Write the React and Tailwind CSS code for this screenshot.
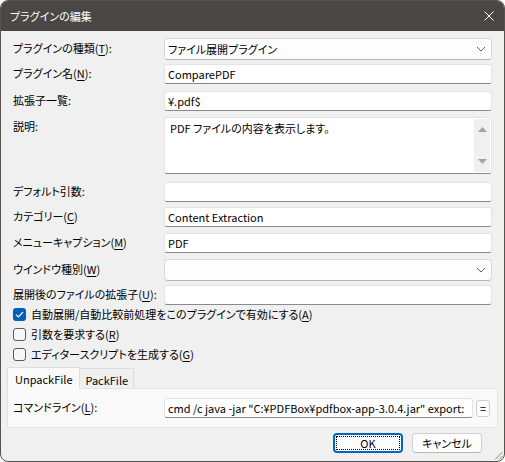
import React from "react";

const font = "[font-family:'Noto_Sans_CJK_JP',sans-serif] [font-feature-settings:'palt']";

const U = ({ c }) => <span className="underline underline-offset-[2px] decoration-[1px]">{c}</span>;

const Edit = ({ children, className = "" }) => (
  <div
    className={
      "h-[20px] bg-white border border-[#e3e3e3] border-b-[#8a8a8a] rounded-[3px] flex items-center pl-[3px] overflow-hidden whitespace-nowrap text-[11px] leading-[16px] text-black " +
      className
    }
  >
    {children}
  </div>
);

const Chevron = () => (
  <svg width="10" height="6" viewBox="0 0 10 6" className="shrink-0">
    <path d="M1 1 L5 5 L9 1" fill="none" stroke="#5f5f5f" strokeWidth="1" />
  </svg>
);

const Combo = ({ children }) => (
  <div className="h-[22px] bg-[#fdfdfd] border border-[#d9d9d9] border-b-[#b5b5b5] rounded-[4px] flex items-center justify-between pl-[3px] pr-[5px] text-[11px] leading-[16px] text-black">
    <span>{children}</span>
    <Chevron />
  </div>
);

const Label = ({ children, className = "" }) => (
  <div className={"text-[11px] leading-[16px] text-black whitespace-nowrap " + className}>{children}</div>
);

const Row = ({ h, label, children, lpt = "pt-[1px]" }) => (
  <div className={"grid grid-cols-[151px_minmax(0,1fr)] items-start " + h}>
    <Label className={lpt}>{label}</Label>
    <div>{children}</div>
  </div>
);

const Check = ({ checked, children }) => (
  <div className="h-[20px] flex items-center gap-[5px]">
    {checked ? (
      <span className="w-[13px] h-[13px] rounded-[3px] bg-[#005fb8] flex items-center justify-center">
        <svg width="9" height="7" viewBox="0 0 9 7">
          <path d="M1 3.6 L3.4 6 L8 1" fill="none" stroke="white" strokeWidth="1.2" />
        </svg>
      </span>
    ) : (
      <span className="w-[13px] h-[13px] rounded-[3px] border border-[#5a5a5a] bg-[#f7f7f7]" />
    )}
    <Label>{children}</Label>
  </div>
);

export default function App() {
  return (
    <div className={"w-[505px] h-[462px] bg-white " + font}>
      <div className="w-[505px] h-[462px] rounded-[8px] border border-[#56534f] overflow-hidden flex flex-col bg-[#f0f0f0] relative">
        {/* title bar */}
        <div className="h-[30px] bg-[#4a4744] flex items-center justify-between pl-[9px] pr-[10px] shrink-0">
          <span className="text-[11px] leading-[16px] text-white">プラグインの編集</span>
          <svg width="10" height="10" viewBox="0 0 10 10">
            <path d="M0.5 0.5 L9.5 9.5 M9.5 0.5 L0.5 9.5" stroke="white" strokeWidth="1" />
          </svg>
        </div>

        <div className="flex flex-col px-[12px] pt-[7px]">
          <Row h="h-[26px]" label={<>プラグインの種類(<U c="T" />):</>} lpt="pt-[2px]">
            <Combo>ファイル展開プラグイン</Combo>
          </Row>
          <Row h="h-[27px]" label={<>プラグイン名(<U c="N" />):</>}>
            <Edit>ComparePDF</Edit>
          </Row>
          <Row h="h-[26px]" label="拡張子一覧:">
            <Edit>¥.pdf$</Edit>
          </Row>
          <Row h="h-[65px]" label="説明:">
            <div className="h-[57px] bg-white border border-[#e3e3e3] border-b-[#8a8a8a] rounded-[3px] flex overflow-hidden">
              <div className="flex-1 pl-[5px] pt-[2px] text-[11px] leading-[16px] text-black">
                PDF ファイルの内容を表示します。
              </div>
              <div className="w-[16px] bg-[#f0f0f0] flex flex-col items-center justify-between py-[8px] my-[1px] mr-[1px]">
                <svg width="9" height="5" viewBox="0 0 9 5">
                  <path d="M0 5 L4.5 0 L9 5 Z" fill="#a3a3a3" />
                </svg>
                <svg width="9" height="5" viewBox="0 0 9 5">
                  <path d="M0 0 L4.5 5 L9 0 Z" fill="#a3a3a3" />
                </svg>
              </div>
            </div>
          </Row>
          <Row h="h-[25px]" label="デフォルト引数:">
            <Edit />
          </Row>
          <Row h="h-[26px]" label={<>カテゴリー(<U c="C" />)</>}>
            <Edit>Content Extraction</Edit>
          </Row>
          <Row h="h-[26px]" label={<>メニューキャプション(<U c="M" />)</>}>
            <Edit>PDF</Edit>
          </Row>
          <Row h="h-[26px]" label={<>ウインドウ種別(<U c="W" />)</>} lpt="pt-[2px]">
            <Combo></Combo>
          </Row>
          <Row h="h-[19px]" label={<>展開後のファイルの拡張子(<U c="U" />):</>}>
            <Edit />
          </Row>

          <Check checked>
            自動展開/自動比較前処理をこのプラグインで有効にする(<U c="A" />)
          </Check>
          <Check>
            引数を要求する(<U c="R" />)
          </Check>
          <Check>
            エディタースクリプトを生成する(<U c="G" />)
          </Check>

          {/* tabs */}
          <div className="-mx-[6px] mt-[3px]">
            <div className="flex items-end h-[21px]">
              <div className="h-[22px] px-[7px] bg-[#f9f9f9] border border-b-0 border-[#dedede] relative z-10 -mb-px flex items-center">
                <Label>UnpackFile</Label>
              </div>
              <div className="h-[20px] px-[5px] bg-[#f0f0f0] border border-l-0 border-b-0 border-[#dedede] flex items-center pt-[2px]">
                <Label>PackFile</Label>
              </div>
            </div>
            <div className="h-[40px] bg-[#f9f9f9] border border-[#e3e3e3] pl-[5px] pr-[7px] pt-[9px]">
              <div className="grid grid-cols-[151px_minmax(0,1fr)] items-start">
                <Label className="pt-[1px]">
                  コマンドライン(<U c="L" />):
                </Label>
                <div className="flex items-center gap-[3px]">
                  <Edit className="flex-1 min-w-0">
                    cmd /c java -jar "C:¥PDFBox¥pdfbox-app-3.0.4.jar" export:
                  </Edit>
                  <div className="w-[14px] h-[17px] shrink-0 bg-[#fdfdfd] border border-[#cfcfcf] rounded-[3px] flex items-center justify-center text-[11px] leading-[12px] text-black">
                    =
                  </div>
                </div>
              </div>
            </div>
          </div>

          {/* buttons */}
          <div className="flex justify-end gap-[9px] pr-[10px] mt-[5px]">
            <div className="relative w-[70px] h-[20px] bg-[#fdfdfd] border-2 border-[#0067c0] rounded-[4px] flex items-center justify-center">
              <span className="absolute inset-[1px] border border-dotted border-black" />
              <Label>OK</Label>
            </div>
            <div className="w-[70px] h-[20px] bg-[#fdfdfd] border border-[#d0d0d0] border-b-[#b8b8b8] rounded-[4px] flex items-center justify-center">
              <Label>キャンセル</Label>
            </div>
          </div>
        </div>

        {/* resize grip */}
        <svg width="10" height="10" viewBox="0 0 10 10" className="absolute right-[1px] bottom-[1px]">
          <path d="M9.5 2 L2 9.5 M9.5 6 L6 9.5" stroke="#8a8a8a" strokeWidth="1" />
        </svg>
      </div>
    </div>
  );
}
